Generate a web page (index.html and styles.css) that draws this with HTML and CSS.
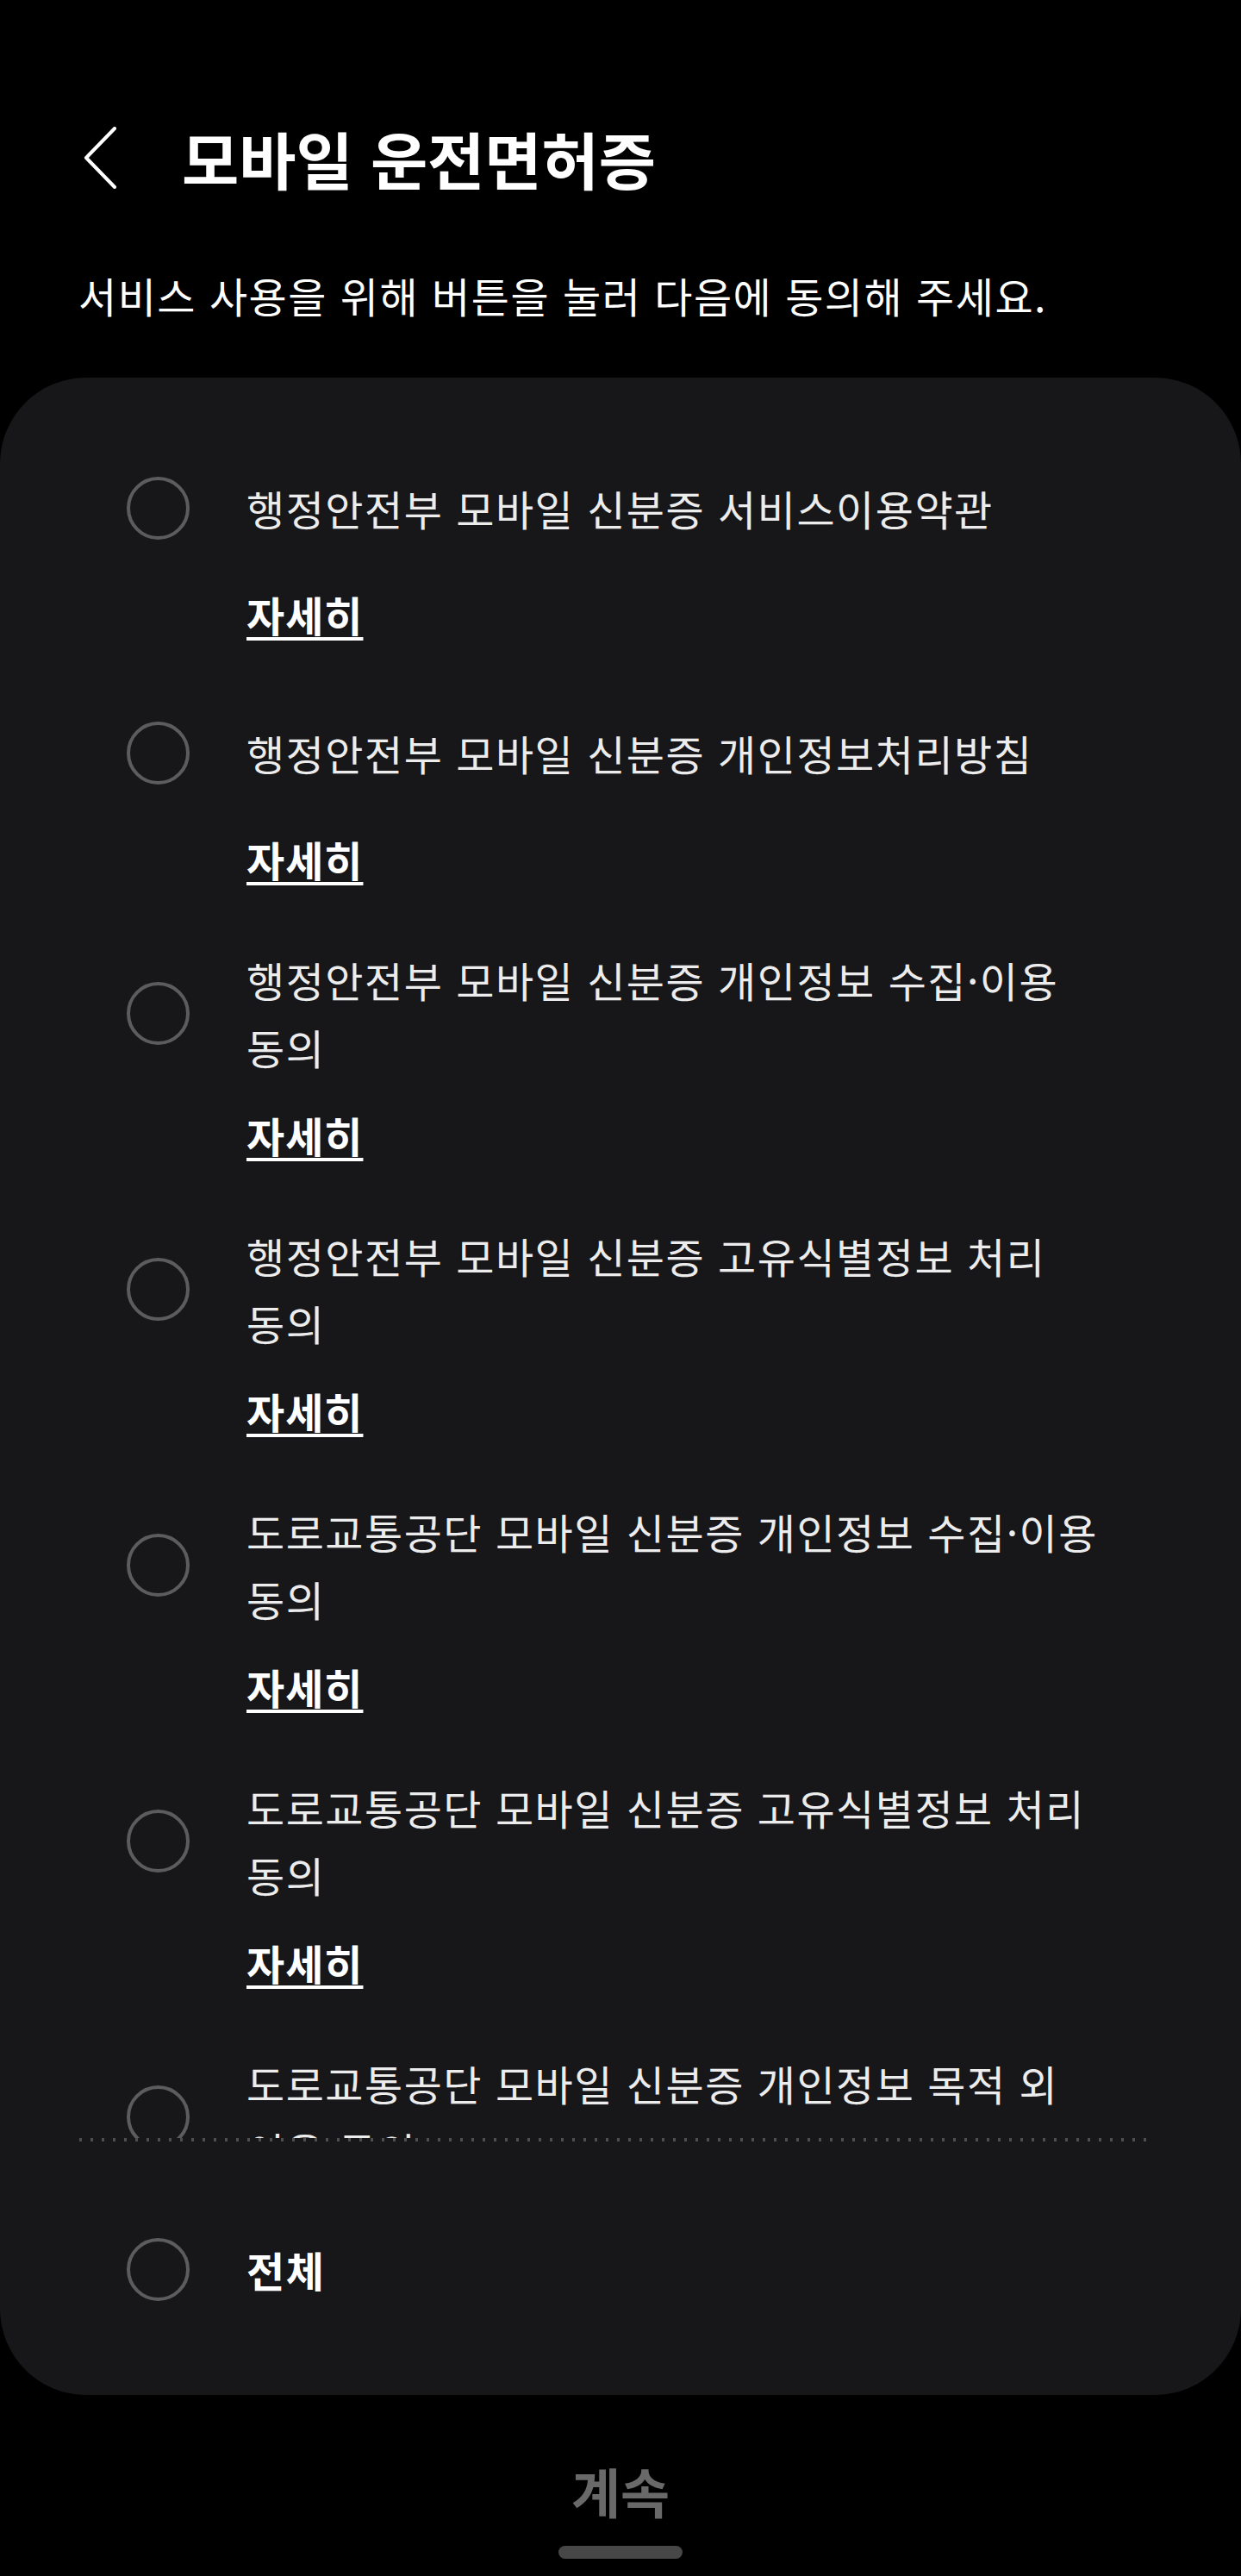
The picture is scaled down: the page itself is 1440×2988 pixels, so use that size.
FILE: index.html
```html
<!DOCTYPE html>
<html lang="ko">
  <head>
    <meta charset="UTF-8" />
    <meta name="viewport" content="width=device-width, initial-scale=1.0" />
    <link rel="stylesheet" href="styles.css">
    <title>모바일 운전면허증</title>
  </head>
  <body>
    <div class="topbar">
      <svg class="back" width="40" height="72" viewBox="0 0 40 72">
        <path d="M37 2 L4 36 L37 70" fill="none" stroke="#fff" stroke-width="4" stroke-linecap="round" stroke-linejoin="round" />
      </svg>
      <h1 class="title">모바일 운전면허증</h1>
    </div>
    <p class="subtitle">서비스 사용을 위해 버튼을 눌러 다음에 동의해 주세요.</p>

    <div class="card">
      <div class="list">
        <div class="item">
          <div class="row"><span class="radio"></span><p class="label">행정안전부 모바일 신분증 서비스이용약관</p></div>
          <a class="more" href="#">자세히</a>
        </div>
        <div class="item">
          <div class="row"><span class="radio"></span><p class="label">행정안전부 모바일 신분증 개인정보처리방침</p></div>
          <a class="more" href="#">자세히</a>
        </div>
        <div class="item">
          <div class="row"><span class="radio"></span><p class="label">행정안전부 모바일 신분증 개인정보 수집·이용<br>동의</p></div>
          <a class="more" href="#">자세히</a>
        </div>
        <div class="item">
          <div class="row"><span class="radio"></span><p class="label">행정안전부 모바일 신분증 고유식별정보 처리<br>동의</p></div>
          <a class="more" href="#">자세히</a>
        </div>
        <div class="item">
          <div class="row"><span class="radio"></span><p class="label">도로교통공단 모바일 신분증 개인정보 수집·이용<br>동의</p></div>
          <a class="more" href="#">자세히</a>
        </div>
        <div class="item">
          <div class="row"><span class="radio"></span><p class="label">도로교통공단 모바일 신분증 고유식별정보 처리<br>동의</p></div>
          <a class="more" href="#">자세히</a>
        </div>
        <div class="item">
          <div class="row"><span class="radio"></span><p class="label">도로교통공단 모바일 신분증 개인정보 목적 외<br>이용 동의</p></div>
          <a class="more" href="#">자세히</a>
        </div>
      </div>
      <div class="divider"></div>
      <div class="all">
        <div class="row"><span class="radio"></span><p class="label bold">전체</p></div>
      </div>
    </div>

    <div class="footer">
      <p class="continue">계속</p>
      <div class="homebar"></div>
    </div>
  </body>
</html>
```

FILE: styles.css
```css
body {
  background-color: #000;
  color: #fff;
  font-family: "Noto Sans CJK KR", "Noto Sans", sans-serif;
  margin: 0px;
  padding: 0px;
  overflow: hidden;
}

p, h1 {
  margin: 0px;
}

/* header */
.topbar {
  display: flex;
  align-items: center;
  height: 100px;
  margin-top: 133px;
  padding-left: 96px;
  gap: 75px;
}

.back {
  flex-shrink: 0;
}

.title {
  font-size: 72px;
  font-weight: 700;
  line-height: 100px;
}

.subtitle {
  font-size: 48px;
  letter-spacing: 1.5px;
  line-height: 78px;
  padding-left: 91px;
  margin-top: 70px;
}

/* agreement card */
.card {
  background-color: #17171a;
  border-radius: 100px;
  margin-top: 57px;
  height: 2340px;
  display: flex;
  flex-direction: column;
}

.list {
  height: 2042px;
  overflow: hidden;
  padding-top: 91px;
  box-sizing: border-box;
  flex-shrink: 0;
}

.item {
  padding-left: 147px;
  margin-bottom: 62px;
}

.row {
  display: flex;
  align-items: center;
  min-height: 120px;
  gap: 66px;
}

.radio {
  width: 73px;
  height: 73px;
  box-sizing: border-box;
  border: 4px solid #5c5c5e;
  border-radius: 50%;
  flex-shrink: 0;
}

.label {
  font-size: 48px;
  letter-spacing: 1.5px;
  line-height: 78px;
  color: #ececec;
  word-break: keep-all;
}

.label.bold {
  font-weight: 700;
  color: #fff;
}

.more {
  display: inline-block;
  margin-left: 139px;
  margin-top: 24px;
  font-size: 48px;
  letter-spacing: 1px;
  line-height: 78px;
  font-weight: 700;
  color: #fff;
  text-decoration: underline;
  text-decoration-thickness: 4px;
  text-underline-offset: 6px;
}

.divider {
  height: 4px;
  margin: 0px 100px 0px 92px;
  background-image: linear-gradient(to right, #4e4e50 0px, #4e4e50 3px, transparent 3px);
  background-size: 13px 4px;
  flex-shrink: 0;
}

.all {
  padding: 88px 0px 86px 147px;
}

/* bottom */
.footer {
  display: flex;
  flex-direction: column;
  align-items: center;
}

.continue {
  margin-top: 71px;
  font-size: 62px;
  line-height: 80px;
  font-weight: 700;
  color: #696969;
}

.homebar {
  margin-top: 24px;
  width: 144px;
  height: 15px;
  border-radius: 8px;
  background-color: #474747;
}
```
